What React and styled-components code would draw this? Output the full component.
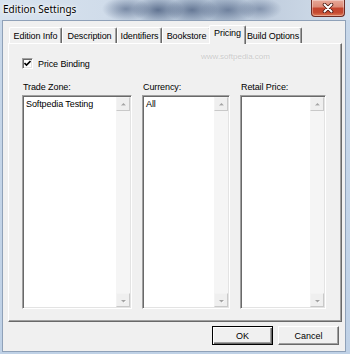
import React from 'react';
import styled, { createGlobalStyle } from 'styled-components';

const Global = createGlobalStyle`
  html, body { margin: 0; padding: 0; background: #fff; }
  body {
    width: 350px; height: 354px; overflow: hidden;
    font-family: "Liberation Sans", Arial, sans-serif;
  }
`;

const FONT = '9px';

const Win = styled.div`
  width: 350px;
  height: 354px;
  box-sizing: border-box;
  display: flex;
  flex-direction: column;
  background: linear-gradient(180deg, #c8d8ea 0%, #bfd1e6 100%);
  overflow: hidden;
`;

const TitleBar = styled.div`
  height: 20px;
  flex: none;
  display: flex;
  align-items: flex-start;
  padding: 0 5px 0 3px;
  box-sizing: border-box;
  background:
    radial-gradient(ellipse 24px 12px at 126px 9px, rgba(70,90,125,0.6), rgba(70,90,125,0) 100%),
    radial-gradient(ellipse 26px 13px at 158px 10px, rgba(60,80,115,0.7), rgba(60,80,115,0) 100%),
    radial-gradient(ellipse 26px 13px at 192px 10px, rgba(60,80,115,0.65), rgba(60,80,115,0) 100%),
    radial-gradient(ellipse 28px 13px at 228px 10px, rgba(65,85,120,0.6), rgba(65,85,120,0) 100%),
    radial-gradient(ellipse 22px 11px at 260px 9px, rgba(75,95,130,0.5), rgba(75,95,130,0) 100%),
    linear-gradient(90deg, #d8e3ef 0%, #d0dcea 30%, #b8c7d9 45%, #b0c0d3 62%, #c2cfdf 78%, #d2deeb 100%);
`;

const TitleText = styled.span`
  font-family: "Noto Sans", "Open Sans", sans-serif;
  font-size: 10px;
  line-height: 18px;
  color: #000;
  text-shadow: 0 0 6px rgba(255,255,255,0.95), 0 0 3px #fff, 0 0 1px #fff;
`;

const CloseBtn = styled.div`
  margin-left: auto;
  width: 34px;
  height: 17px;
  box-sizing: border-box;
  border: 1px solid #6e2c24;
  border-top: none;
  border-radius: 0 0 4px 4px;
  background: linear-gradient(180deg, #e8a898 0%, #dc8c78 42%, #c5452e 52%, #c54a31 78%, #de7a55 100%);
  box-shadow: inset 0 0 0 1px rgba(255,255,255,0.35);
  display: flex;
  align-items: center;
  justify-content: center;
`;

const Client = styled.div`
  flex: 1;
  margin: 0 4px 2px 2px;
  border: 1px solid #8fa1b8;
  background: #f0f0f0;
  display: flex;
  flex-direction: column;
  padding: 4px 3px 0 5px;
  box-sizing: border-box;
`;

const TabRow = styled.div`
  height: 18px;
  flex: none;
  display: flex;
  align-items: flex-end;
  padding-left: 1px;
  position: relative;
  z-index: 2;
`;

const Tab = styled.div`
  width: ${p => p.$w}px;
  height: ${p => (p.$active ? 19 : 16)}px;
  margin: ${p => (p.$active ? '0 -2px -1px -2px' : '0')};
  box-sizing: border-box;
  flex: none;
  background: #f0f0f0;
  border-top: 1px solid #fff;
  border-left: 1px solid #fff;
  border-right: 1px solid #696969;
  border-radius: 2px 2px 0 0;
  box-shadow: inset -1px 0 0 #a0a0a0;
  display: flex;
  align-items: ${p => (p.$active ? 'flex-start' : 'center')};
  padding-top: ${p => (p.$active ? '2px' : '0')};
  justify-content: center;
  font-size: ${FONT};
  letter-spacing: -0.1px;
  color: #000;
  white-space: nowrap;
  position: relative;
  z-index: ${p => (p.$active ? 2 : 1)};
`;

const Panel = styled.div`
  height: 279px;
  flex: none;
  box-sizing: border-box;
  border: 1px solid;
  border-color: #fff #696969 #696969 #fff;
  box-shadow: inset -1px -1px 0 #a0a0a0;
  padding: 13px 15px 12px 13px;
  display: flex;
  flex-direction: column;
  position: relative;
`;

const Watermark = styled.span`
  position: absolute;
  left: 192px;
  top: 8px;
  font-size: 8px;
  color: #cbcbcb;
  text-shadow: 0 0 2px #fff;
  pointer-events: none;
`;

const CheckRow = styled.label`
  display: flex;
  align-items: center;
  gap: 5px;
  height: 13px;
  font-size: ${FONT};
  letter-spacing: -0.1px;
  color: #000;
`;

const CheckBox = styled.span`
  width: 11px;
  height: 11px;
  box-sizing: border-box;
  border: 1px solid;
  border-color: #a0a0a0 #fff #fff #a0a0a0;
  box-shadow: inset 1px 1px 0 #696969, inset -1px -1px 0 #e3e3e3;
  background: #fff;
  display: flex;
  align-items: center;
  justify-content: center;
`;

const Columns = styled.div`
  margin-top: 12px;
  flex: 1;
  display: grid;
  grid-template-columns: 110px 88px 86px;
  column-gap: 10px;
`;

const Column = styled.div`
  display: flex;
  flex-direction: column;
  gap: 2px;
`;

const Label = styled.div`
  font-size: ${FONT};
  letter-spacing: -0.1px;
  line-height: 11px;
  color: #000;
  padding-left: 1px;
`;

const ListBox = styled.div`
  flex: 1;
  box-sizing: border-box;
  border: 1px solid;
  border-color: #a0a0a0 #fff #fff #a0a0a0;
  box-shadow: inset 1px 1px 0 #696969, inset -1px -1px 0 #e3e3e3;
  padding: 1px;
  display: flex;
  background: #fff;
`;

const Items = styled.div`
  flex: 1;
  background: #fff;
  padding: 1px 2px;
  font-size: ${FONT};
  letter-spacing: -0.1px;
  line-height: 12px;
  color: #000;
`;

const ScrollBar = styled.div`
  width: 14px;
  flex: none;
  display: flex;
  flex-direction: column;
  justify-content: space-between;
  background: #f5f5f5;
`;

const ScrollBtn = styled.div`
  width: 14px;
  height: 14px;
  box-sizing: border-box;
  background: #efefef;
  border: 1px solid;
  border-color: #f3f3f3 #c9c9c9 #c9c9c9 #f3f3f3;
  display: flex;
  align-items: center;
  justify-content: center;
`;

const Footer = styled.div`
  flex: 1;
  display: flex;
  justify-content: flex-end;
  align-items: flex-start;
  gap: 5px;
  padding: 4px 3px 0 0;
`;

const Button = styled.div`
  width: 61px;
  height: 19px;
  box-sizing: border-box;
  background: #f0f0f0;
  border: 1px solid;
  border-color: ${p => (p.$default ? '#000' : '#fff #696969 #696969 #fff')};
  box-shadow: ${p =>
    p.$default
      ? 'inset 1px 1px 0 #fff, inset -1px -1px 0 #696969, inset -2px -2px 0 #a0a0a0'
      : 'inset -1px -1px 0 #a0a0a0'};
  display: flex;
  align-items: center;
  justify-content: center;
  font-size: ${FONT};
  color: #000;
`;

const CloseIcon = () => (
  <svg width="12" height="10" viewBox="0 0 12 10">
    <path d="M2.5 1.5 L9.5 8.5 M9.5 1.5 L2.5 8.5" stroke="#4a1810" strokeWidth="3.6" strokeLinecap="round" />
    <path d="M2.5 1.5 L9.5 8.5 M9.5 1.5 L2.5 8.5" stroke="#fff" strokeWidth="2" strokeLinecap="round" />
  </svg>
);

const CheckMark = () => (
  <svg width="7" height="7" viewBox="0 0 7 7">
    <path d="M0.5 3 L2.5 5 L6.5 1" stroke="#000" strokeWidth="1.6" fill="none" />
  </svg>
);

const Arrow = ({ down }) => (
  <svg width="7" height="5" viewBox="0 0 7 5">
    <path d={down ? 'M1 2 L6 2 L3.5 4.5 Z' : 'M1 3.5 L6 3.5 L3.5 1 Z'} fill="#fff" transform="translate(0.6,0.6)" />
    <path d={down ? 'M1 2 L6 2 L3.5 4.5 Z' : 'M1 3.5 L6 3.5 L3.5 1 Z'} fill="#a3a3a3" />
  </svg>
);

const List = ({ label, items }) => (
  <Column>
    <Label>{label}</Label>
    <ListBox>
      <Items>
        {items.map(i => (
          <div key={i}>{i}</div>
        ))}
      </Items>
      <ScrollBar>
        <ScrollBtn><Arrow /></ScrollBtn>
        <ScrollBtn><Arrow down /></ScrollBtn>
      </ScrollBar>
    </ListBox>
  </Column>
);

const tabs = [
  { name: 'Edition Info', w: 53 },
  { name: 'Description', w: 55 },
  { name: 'Identifiers', w: 45 },
  { name: 'Bookstore', w: 49 },
  { name: 'Pricing', w: 37, active: true },
  { name: 'Build Options', w: 58 },
];

export default function App() {
  return (
    <>
      <Global />
      <Win>
        <TitleBar>
          <TitleText>Edition Settings</TitleText>
          <CloseBtn><CloseIcon /></CloseBtn>
        </TitleBar>
        <Client>
          <TabRow>
            {tabs.map(t => (
              <Tab key={t.name} $w={t.w} $active={t.active}>{t.name}</Tab>
            ))}
          </TabRow>
          <Panel>
            <Watermark>www.softpedia.com</Watermark>
            <CheckRow>
              <CheckBox><CheckMark /></CheckBox>
              Price Binding
            </CheckRow>
            <Columns>
              <List label="Trade Zone:" items={['Softpedia Testing']} />
              <List label="Currency:" items={['All']} />
              <List label="Retail Price:" items={[]} />
            </Columns>
          </Panel>
          <Footer>
            <Button $default>OK</Button>
            <Button>Cancel</Button>
          </Footer>
        </Client>
      </Win>
    </>
  );
}
